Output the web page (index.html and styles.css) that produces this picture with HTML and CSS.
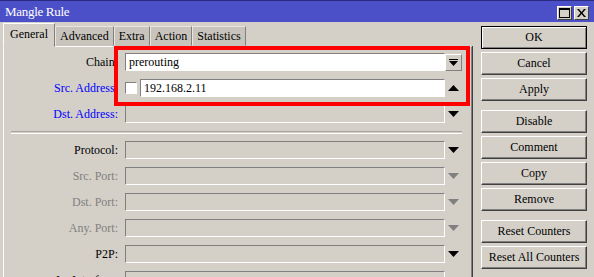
FILE: index.html
```html
<!DOCTYPE html>
<html>
<head>
<meta charset="utf-8" />
<title>Mangle Rule</title>
<link rel="stylesheet" href="styles.css">
</head>
<body>
<div class="window">
	<div class="titlebar">
		<span class="title">Mangle Rule</span>
		<div class="tb_btns">
			<span class="tb_btn"><svg width="11" height="10" viewBox="0 0 11 10"><rect x="0.5" y="0.5" width="10" height="9" fill="none" stroke="#000"/><rect x="0" y="0" width="11" height="2" fill="#000"/></svg></span>
			<span class="tb_btn"><svg width="9" height="8" viewBox="0 0 9 8"><path d="M0 0h2l2.5 3 2.5-3h2l-3.5 4 3.5 4h-2l-2.5-3-2.5 3h-2l3.5-4z" fill="#000"/></svg></span>
		</div>
	</div>
	<div class="main">
		<div class="editor">
			<div class="tabs">
				<span class="tab active">General</span>
				<span class="tab">Advanced</span>
				<span class="tab">Extra</span>
				<span class="tab">Action</span>
				<span class="tab">Statistics</span>
			</div>
			<div class="panel">
				<div class="highlight"></div>
				<div class="row">
					<label class="lbl">Chain:</label>
					<div class="field white">prerouting</div>
					<span class="ctrl"><span class="drop_btn"><svg width="9" height="7" viewBox="0 0 9 7"><rect x="0" y="0" width="9" height="1" fill="#000"/><path d="M0 2h9l-4.5 5z" fill="#000"/></svg></span></span>
				</div>
				<div class="row">
					<label class="lbl blue">Src. Address:</label>
					<div class="pair">
						<span class="check"></span>
						<div class="field white grow">192.168.2.11</div>
					</div>
					<span class="ctrl"><svg width="11" height="6" viewBox="0 0 11 6"><path d="M5.5 0l5.5 6h-11z" fill="#000"/></svg></span>
				</div>
				<div class="row">
					<label class="lbl blue">Dst. Address:</label>
					<div class="field"></div>
					<span class="ctrl"><svg width="11" height="6" viewBox="0 0 11 6"><path d="M0 0h11l-5.5 6z" fill="#000"/></svg></span>
				</div>
				<div class="sep"></div>
				<div class="row">
					<label class="lbl">Protocol:</label>
					<div class="field"></div>
					<span class="ctrl"><svg width="11" height="6" viewBox="0 0 11 6"><path d="M0 0h11l-5.5 6z" fill="#000"/></svg></span>
				</div>
				<div class="row">
					<label class="lbl grey">Src. Port:</label>
					<div class="field"></div>
					<span class="ctrl"><svg width="11" height="6" viewBox="0 0 11 6"><path d="M0 0h11l-5.5 6z" fill="#808080"/></svg></span>
				</div>
				<div class="row">
					<label class="lbl grey">Dst. Port:</label>
					<div class="field"></div>
					<span class="ctrl"><svg width="11" height="6" viewBox="0 0 11 6"><path d="M0 0h11l-5.5 6z" fill="#808080"/></svg></span>
				</div>
				<div class="row">
					<label class="lbl grey">Any. Port:</label>
					<div class="field"></div>
					<span class="ctrl"><svg width="11" height="6" viewBox="0 0 11 6"><path d="M0 0h11l-5.5 6z" fill="#808080"/></svg></span>
				</div>
				<div class="row">
					<label class="lbl">P2P:</label>
					<div class="field"></div>
					<span class="ctrl"><svg width="11" height="6" viewBox="0 0 11 6"><path d="M0 0h11l-5.5 6z" fill="#000"/></svg></span>
				</div>
				<div class="row">
					<label class="lbl">In. Interface:</label>
					<div class="field"></div>
					<span class="ctrl"><svg width="11" height="6" viewBox="0 0 11 6"><path d="M0 0h11l-5.5 6z" fill="#000"/></svg></span>
				</div>
			</div>
		</div>
		<div class="buttons">
			<span class="btn default">OK</span>
			<span class="btn">Cancel</span>
			<span class="btn">Apply</span>
			<span class="btn group">Disable</span>
			<span class="btn">Comment</span>
			<span class="btn">Copy</span>
			<span class="btn">Remove</span>
			<span class="btn group">Reset Counters</span>
			<span class="btn">Reset All Counters</span>
		</div>
	</div>
</div>
</body>
</html>
```

FILE: styles.css
```css
html,body{margin:0;padding:0;}
body{font:normal 12px/18px "Liberation Serif", "Times New Roman", serif;color:#000;background:#d4d0c8;}
.window{width:594px;height:277px;overflow:hidden;background:#d4d0c8;}

/* title bar */
.titlebar{display:flex;align-items:center;justify-content:space-between;height:22px;box-sizing:border-box;border-top:1px solid #2a2c80;background:#4c50c8;padding:0 5px 0 5px;}
.title{color:#fff;font-size:13px;letter-spacing:-0.3px;}
.tb_btns{display:flex;gap:2px;margin-top:2px;}
.tb_btn{display:flex;align-items:center;justify-content:center;width:15px;height:14px;box-sizing:border-box;background:#d4d0c8;border:1px solid;border-color:#fff #404040 #404040 #fff;}

.main{display:flex;align-items:flex-start;}

/* tabs */
.editor{margin-left:3px;width:469px;}
.tabs{display:flex;align-items:flex-end;height:23px;margin-top:1px;}
.tab{height:20px;box-sizing:border-box;padding:0 4px;line-height:18px;background:#c8c4bc;border:1px solid;border-color:#e8e6e0 #808080 transparent #e8e6e0;font-size:12px;white-space:nowrap;}
.tab.active{height:24px;margin-bottom:-1px;position:relative;z-index:1;padding:0 6px;background:#d4d0c8;border-color:#fff #808080 transparent #fff;line-height:20px;}

/* panel */
.panel{position:relative;height:240px;box-sizing:border-box;padding-top:6px;border-top:1px solid #fff;border-left:1px solid #fff;border-right:1px solid #808080;box-shadow:1px 0 0 #404040;}
.highlight{position:absolute;left:110px;top:-1px;width:356px;height:60px;box-sizing:border-box;border:4px solid #ff0000;}

.row{display:flex;align-items:center;height:18px;margin-bottom:8px;}
.lbl{width:114px;text-align:right;white-space:nowrap;margin-right:7px;}
.blue{color:#0000ff;}
.grey{color:#808080;}
.field{width:320px;height:18px;box-sizing:border-box;padding-left:3px;line-height:16px;border:1px solid;border-color:#808080 #fff #fff #808080;background:#d4d0c8;white-space:nowrap;}
.white{background:#fff;}
.pair{display:flex;align-items:center;width:320px;gap:3px;}
.field.grow{flex:1;width:auto;}
.check{width:12px;height:12px;box-sizing:border-box;background:#fff;border:1px solid;border-color:#808080 #fff #fff #808080;}
.ctrl{width:17px;height:18px;display:flex;align-items:center;justify-content:center;}
.drop_btn{display:flex;align-items:center;justify-content:center;width:17px;height:17px;box-sizing:border-box;border:1px solid;border-color:#fff #808080 #808080 #fff;background:#d4d0c8;}

.sep{margin:1px 0 7px 7px;width:451px;height:1px;border-top:1px solid #a8a49c;border-bottom:1px solid #fff;}

/* right buttons */
.buttons{display:flex;flex-direction:column;gap:3px;margin-left:9px;margin-top:4px;width:106px;}
.btn{display:block;height:23px;box-sizing:border-box;text-align:center;line-height:20px;border:1px solid;border-color:#fff #404040 #404040 #fff;box-shadow:inset -1px -1px 0 #808080;white-space:nowrap;}
.btn.default{border:1px solid #000;box-shadow:inset 1px 1px 0 #fff,inset -1px -1px 0 #808080;}
.btn.group{margin-top:6px;}
```
